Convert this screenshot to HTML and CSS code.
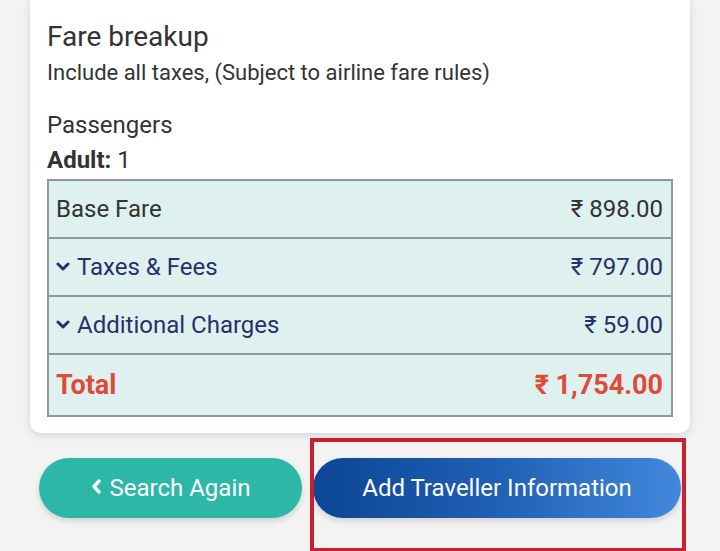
FILE: index.html
```html
<!DOCTYPE html>
<html lang="en">
<head>
<meta charset="utf-8">
<title>Fare breakup</title>
<link rel="stylesheet" href="styles.css">
</head>
<body>
<div class="page">
  <section class="card">
    <h2 class="title">Fare breakup</h2>
    <p class="subtitle">Include all taxes, (Subject to airline fare rules)</p>
    <p class="pax-label">Passengers</p>
    <p class="pax"><b>Adult:</b> 1</p>
    <table class="fare">
      <tr class="row-base">
        <td>Base Fare</td>
        <td class="amt">₹ 898.00</td>
      </tr>
      <tr class="row-exp">
        <td><svg class="chev" viewBox="0 0 14 10" width="14" height="10"><polyline points="2,2 7,7 12,2" fill="none" stroke="currentColor" stroke-width="3" stroke-linecap="round" stroke-linejoin="round"/></svg>Taxes &amp; Fees</td>
        <td class="amt">₹ 797.00</td>
      </tr>
      <tr class="row-exp">
        <td><svg class="chev" viewBox="0 0 14 10" width="14" height="10"><polyline points="2,2 7,7 12,2" fill="none" stroke="currentColor" stroke-width="3" stroke-linecap="round" stroke-linejoin="round"/></svg>Additional Charges</td>
        <td class="amt">₹ 59.00</td>
      </tr>
      <tr class="row-total">
        <td>Total</td>
        <td class="amt">₹ 1,754.00</td>
      </tr>
    </table>
  </section>
  <div class="actions">
    <button class="btn btn-search"><svg class="back" viewBox="0 0 10 15" width="10" height="15"><polyline points="8,2 3,7.5 8,13" fill="none" stroke="currentColor" stroke-width="3.4" stroke-linecap="round" stroke-linejoin="round"/></svg>Search Again</button>
    <div class="highlight-wrap">
      <button class="btn btn-add">Add Traveller Information</button>
      <span class="highlight"></span>
    </div>
  </div>
</div>
</body>
</html>
```
FILE: styles.css
```css
* { box-sizing: border-box; }
html, body { margin: 0; padding: 0; }
body {
  background: #f3f3f3;
  font-family: Roboto, "Liberation Sans", Arial, sans-serif;
  width: 720px;
  height: 551px;
  overflow: hidden;
}
.page {
  padding: 0 30px;
}
.card {
  margin-top: -6px;
  background: #fff;
  border-radius: 10px;
  box-shadow: 0 2px 8px rgba(0,0,0,0.13);
  padding: 27px 17px 16px;
}
.title {
  margin: 0;
  font-size: 28px;
  line-height: 32px;
  font-weight: 400;
  color: #333;
}
.subtitle {
  margin: 7px 0 0;
  font-size: 22px;
  line-height: 26px;
  color: #333;
}
.pax-label {
  margin: 25px 0 0;
  font-size: 24px;
  line-height: 28px;
  color: #333;
}
.pax {
  margin: 7px 0 0;
  font-size: 24px;
  line-height: 28px;
  color: #333;
}
.pax b { font-weight: 700; }
.fare {
  margin-top: 5px;
  width: 100%;
  border-collapse: collapse;
  background: #def1ee;
  border: 2px solid #8f9a97;
}
.fare td {
  border-top: 2px solid #8f9a97;
  height: 58px;
  padding: 0 8px 0 8px;
  font-size: 24px;
  color: #333;
  vertical-align: middle;
}
.fare td:first-child { padding-left: 7px; }
.fare .amt { text-align: right; padding-right: 8px; }
.row-exp td { color: #27306c; }
.chev {
  display: inline-block;
  vertical-align: middle;
  margin: -4px 7px 0 0;
}
.row-total td {
  height: 62px;
  color: #e04a38;
  font-weight: 700;
  font-size: 27px;
}
.actions {
  display: flex;
  gap: 11px;
  margin-top: 25px;
  padding-left: 9px;
}
.btn {
  height: 60px;
  border: 0;
  border-radius: 30px;
  color: #fff;
  font-family: inherit;
  font-size: 24px;
  display: flex;
  align-items: center;
  justify-content: center;
  box-shadow: 0 3px 6px rgba(0,0,0,0.14);
}
.btn-search {
  width: 263px;
  background: #2db7a6;
}
.back { margin-right: 9px; margin-top: -3px; }
.highlight-wrap {
  position: relative;
}
.btn-add {
  width: 368px;
  background: linear-gradient(90deg, #0c4694 0%, #2060b5 50%, #4288dc 100%);
}
.highlight {
  position: absolute;
  left: -3px;
  right: -5px;
  top: -20px;
  bottom: -34px;
  border: 4px solid #c8202e;
  pointer-events: none;
}
```
